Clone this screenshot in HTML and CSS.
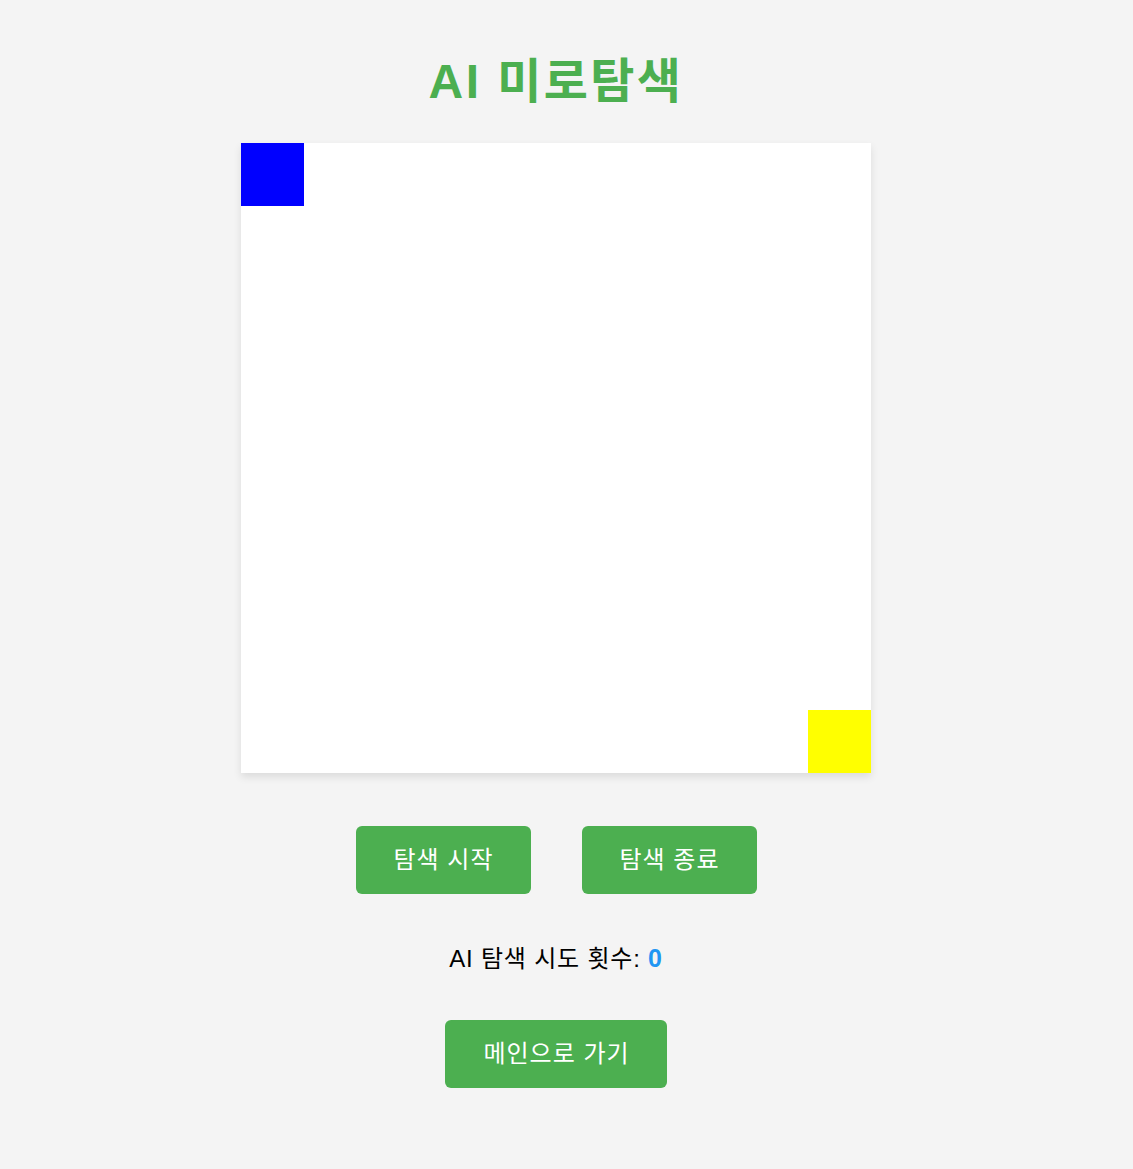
FILE: index.html
```html
<!DOCTYPE html>
<html lang="ko">
<head>
<meta charset="utf-8">
<title>AI 미로탐색</title>
<link rel="stylesheet" href="styles.css">
</head>
<body>
<main class="page">
  <h1 class="title">AI 미로탐색</h1>
  <div class="maze">
    <div class="cell start"></div>
    <div class="cell goal"></div>
  </div>
  <div class="controls">
    <button class="btn">탐색 시작</button>
    <button class="btn">탐색 종료</button>
  </div>
  <p class="counter">AI 탐색 시도 횟수: <span class="count">0</span></p>
  <button class="btn btn-main">메인으로 가기</button>
</main>
</body>
</html>
```

FILE: styles.css
```css
html, body {
  margin: 0;
  padding: 0;
  background: #f4f4f4;
}
body {
  font-family: "Liberation Sans", "Noto Sans CJK KR", sans-serif;
  color: #000;
}
.page {
  display: flex;
  flex-direction: column;
  align-items: center;
  padding-top: 54px;
  padding-right: 21px;
}
.title {
  margin: 0 0 33px;
  font-size: 48px;
  line-height: 56px;
  font-weight: bold;
  letter-spacing: 2.4px;
  color: #4caf50;
}
.maze {
  width: 630px;
  height: 630px;
  background: #fff;
  box-shadow: 0 4px 8px rgba(0, 0, 0, 0.1);
  display: grid;
  grid-template-columns: repeat(10, 63px);
  grid-template-rows: repeat(10, 63px);
}
.cell.start {
  grid-column: 1;
  grid-row: 1;
  background: #0000ff;
}
.cell.goal {
  grid-column: 10;
  grid-row: 10;
  background: #ffff00;
}
.controls {
  display: flex;
  gap: 51px;
  margin-top: 53px;
}
.btn {
  font-family: "Liberation Sans", "Noto Sans CJK KR", sans-serif;
  font-size: 24px;
  line-height: 28px;
  letter-spacing: 1px;
  padding: 20px 37px 20px 38px;
  border: none;
  border-radius: 6px;
  background: #4caf50;
  color: #fff;
  cursor: pointer;
}
.counter {
  margin: 50px 0 0;
  font-size: 24px;
  line-height: 28px;
  letter-spacing: 0.8px;
}
.count {
  font-weight: bold;
  color: #2196f3;
  font-size: 25px;
}
.btn-main {
  margin-top: 47px;
}
```
